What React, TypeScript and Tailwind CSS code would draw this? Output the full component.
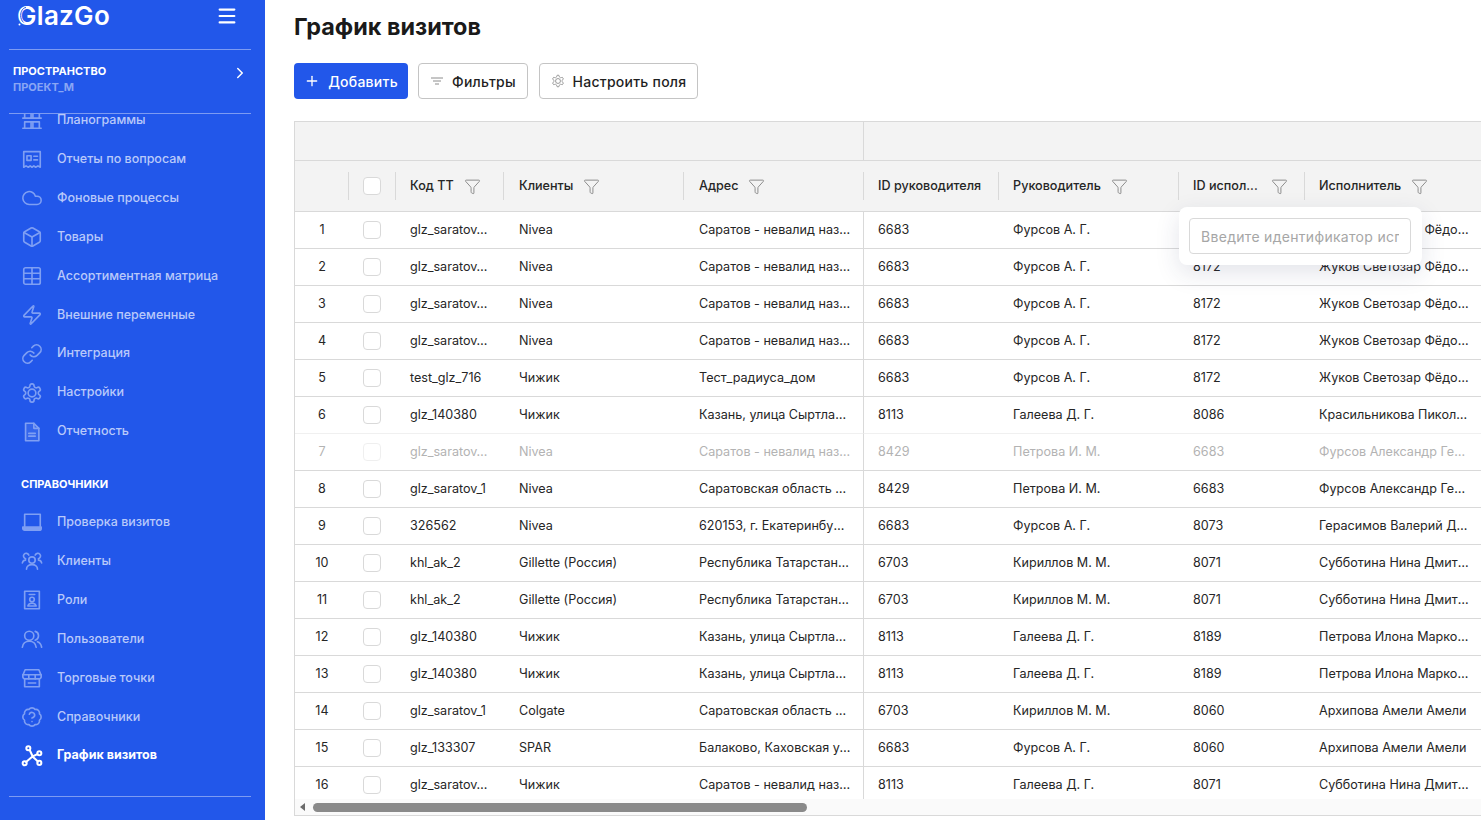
import {
  BadgeHelp,
  Box,
  ChevronRight,
  Cloud,
  Funnel,
  Link,
  Menu,
  Plus,
  Table,
  Zap,
} from "lucide-react";
import type { ReactNode } from "react";

const iconProps = { width: 22, height: 22, viewBox: "0 0 24 24", fill: "none", stroke: "currentColor", strokeWidth: 1.8, strokeLinecap: "round", strokeLinejoin: "round" } as const;

const gearPath =
  "M12.22 2h-.44a2 2 0 0 0-2 2v.18a2 2 0 0 1-1 1.73l-.43.25a2 2 0 0 1-2 0l-.15-.08a2 2 0 0 0-2.73.73l-.22.38a2 2 0 0 0 .73 2.73l.15.1a2 2 0 0 1 1 1.72v.51a2 2 0 0 1-1 1.74l-.15.09a2 2 0 0 0-.73 2.73l.22.38a2 2 0 0 0 2.73.73l.15-.08a2 2 0 0 1 2 0l.43.25a2 2 0 0 1 1 1.73V20a2 2 0 0 0 2 2h.44a2 2 0 0 0 2-2v-.18a2 2 0 0 1 1-1.73l.43-.25a2 2 0 0 1 2 0l.15.08a2 2 0 0 0 2.73-.73l.22-.39a2 2 0 0 0-.73-2.73l-.15-.08a2 2 0 0 1-1-1.74v-.5a2 2 0 0 1 1-1.74l.15-.09a2 2 0 0 0 .73-2.73l-.22-.38a2 2 0 0 0-2.73-.73l-.15.08a2 2 0 0 1-2 0l-.43-.25a2 2 0 0 1-1-1.73V4a2 2 0 0 0-2-2z";

const PlanogramIcon = () => (
  <svg {...iconProps}>
    <path d="M2 21h20M4 21v-7h7v7M13 21v-7h7v7M4 14h16M4 10V3h7v7M13 10V3h7v7M2 10h20" />
  </svg>
);
const ReportIcon = () => (
  <svg {...iconProps}>
    <path d="M3 4h18v17l-2.500-1.500L16 21l-2-1.500L12 21l-2-1.500L8 21l-2.500-1.500L3 21z" />
    <path d="M6.500 8.500h4.500v5H6.500zM14 9h4M14 13h4" />
  </svg>
);
const GearIcon = () => (
  <svg {...iconProps}>
    <path d={gearPath} />
    <circle cx="12" cy="12" r="4.200" />
  </svg>
);
const DocIcon = () => (
  <svg {...iconProps}>
    <path d="M5 2.500h9l5.500 5.500v13.500H5z" fill="currentColor" fillOpacity="0.2" />
    <path d="M14 2.500V8h5.500" />
    <path d="M8.500 13.500h7M8.500 16.500h7" />
  </svg>
);
const LaptopIcon = () => (
  <svg {...iconProps}>
    <path d="M4 17V3.500h17V17" />
    <path d="M2 17.500h20v1.500a2 2 0 0 1-2 2H4a2 2 0 0 1-2-2z" fill="currentColor" />
  </svg>
);
const ClientsIcon = () => (
  <svg {...iconProps}>
    <circle cx="12" cy="11" r="3.500" />
    <path d="M6 21c0-3 2.500-5 6-5s6 2 6 5M8.500 5.500a3 3 0 1 0-3.500 4M15.500 5.500a3 3 0 1 1 3.500 4M1.500 14c.5-2 2-3 3.500-3M22.500 14c-.5-2-2-3-3.500-3" />
  </svg>
);
const RoleIcon = () => (
  <svg {...iconProps}>
    <path d="M4 2.500h16v19H4zM9 6h6" />
    <circle cx="12" cy="11.500" r="2.500" />
    <path d="M7.500 18.500c.5-2 2-3 4.500-3s4 1 4.500 3z" />
  </svg>
);
const PeopleIcon = () => (
  <svg {...iconProps}>
    <circle cx="9" cy="8.500" r="5" />
    <path d="M1.500 21c.5-4 3.500-6.500 7.500-6.500s7 2.500 7.500 6.500M15.500 3.700a5 5 0 0 1 0 9.600M18 15c2.500.8 4 3 4.500 6" />
  </svg>
);
const ShopIcon = () => (
  <svg {...iconProps}>
    <path d="M4.500 3h15l2.500 6v1.500a2.500 2.500 0 0 1-2.500 2.500h-15A2.500 2.500 0 0 1 2 10.500V9z" />
    <path d="M2 8.500h20M8.500 8.500V13M15.500 8.500V13M4 13v8.500h16V13M8 17.500h8" />
  </svg>
);
const GraphIcon = () => (
  <svg {...iconProps} strokeWidth={2.2}>
    <circle cx="8" cy="3.500" r="2.200" />
    <circle cx="20" cy="9" r="2.200" />
    <circle cx="20" cy="19.500" r="2.200" />
    <circle cx="4" cy="20" r="2.200" />
    <path d="M9.500 5.500l3 6.500M18 10l-5.500 2.500M18.500 18l-6-5.500M5.500 18.500l7-6" />
  </svg>
);

type NavEntry = { label: string; icon: ReactNode; active?: boolean };

const topNav: NavEntry[] = [
  { label: "Планограммы", icon: <PlanogramIcon /> },
  { label: "Отчеты по вопросам", icon: <ReportIcon /> },
  { label: "Фоновые процессы", icon: <Cloud size={24} strokeWidth={1.7} /> },
  { label: "Товары", icon: <Box size={22} strokeWidth={1.8} /> },
  { label: "Ассортиментная матрица", icon: <Table size={22} strokeWidth={1.8} /> },
  { label: "Внешние переменные", icon: <Zap size={22} strokeWidth={1.8} /> },
  { label: "Интеграция", icon: <Link size={22} strokeWidth={1.8} /> },
  { label: "Настройки", icon: <GearIcon /> },
  { label: "Отчетность", icon: <DocIcon /> },
];

const refNav: NavEntry[] = [
  { label: "Проверка визитов", icon: <LaptopIcon /> },
  { label: "Клиенты", icon: <ClientsIcon /> },
  { label: "Роли", icon: <RoleIcon /> },
  { label: "Пользователи", icon: <PeopleIcon /> },
  { label: "Торговые точки", icon: <ShopIcon /> },
  { label: "Справочники", icon: <BadgeHelp size={22} strokeWidth={1.8} /> },
  { label: "График визитов", icon: <GraphIcon />, active: true },
];

const saratovAddr = "Саратов - невалид название магазина";
const oblAddr = "Саратовская область Балаково";
const kazan = "Казань, улица Сыртлановой, 12";
const tatar = "Республика Татарстан, Казань";
const zhukov = "Жуков Светозар Фёдорович";
const fursov = "Фурсов Александр Геннадьевич";
const subbotina = "Субботина Нина Дмитриевна";
const petrova = "Петрова Илона Марковна";
const arkhipova = "Архипова Амели Амели";

const rows = [
  ["glz_saratov_10", "Nivea", saratovAddr, "6683", "Фурсов А. Г.", "8172", zhukov],
  ["glz_saratov_10", "Nivea", saratovAddr, "6683", "Фурсов А. Г.", "8172", zhukov],
  ["glz_saratov_10", "Nivea", saratovAddr, "6683", "Фурсов А. Г.", "8172", zhukov],
  ["glz_saratov_10", "Nivea", saratovAddr, "6683", "Фурсов А. Г.", "8172", zhukov],
  ["test_glz_716", "Чижик", "Тест_радиуса_дом", "6683", "Фурсов А. Г.", "8172", zhukov],
  ["glz_140380", "Чижик", kazan, "8113", "Галеева Д. Г.", "8086", "Красильникова Пиколина Ивановна"],
  ["glz_saratov_10", "Nivea", saratovAddr, "8429", "Петрова И. М.", "6683", fursov],
  ["glz_saratov_1", "Nivea", oblAddr, "8429", "Петрова И. М.", "6683", fursov],
  ["326562", "Nivea", "620153, г. Екатеринбург, ул. Ленина", "6683", "Фурсов А. Г.", "8073", "Герасимов Валерий Дмитриевич"],
  ["khl_ak_2", "Gillette (Россия)", tatar, "6703", "Кириллов М. М.", "8071", subbotina],
  ["khl_ak_2", "Gillette (Россия)", tatar, "6703", "Кириллов М. М.", "8071", subbotina],
  ["glz_140380", "Чижик", kazan, "8113", "Галеева Д. Г.", "8189", petrova],
  ["glz_140380", "Чижик", kazan, "8113", "Галеева Д. Г.", "8189", petrova],
  ["glz_saratov_1", "Colgate", oblAddr, "6703", "Кириллов М. М.", "8060", arkhipova],
  ["glz_133307", "SPAR", "Балаково, Каховская улица, 5", "6683", "Фурсов А. Г.", "8060", arkhipova],
  ["glz_saratov_10", "Чижик", saratovAddr, "8113", "Галеева Д. Г.", "8071", subbotina],
];

function NavItem({ label, icon, active }: NavEntry) {
  return (
    <div className={`flex h-[38.9px] shrink-0 items-center pl-[21px] text-[12.5px] ${active ? "font-bold text-white" : "font-medium text-[#b9c9fa]"}`}>
      <span className={`flex w-[22px] justify-center ${active ? "text-white" : "text-[#7f9ff3]"}`}>{icon}</span>
      <span className="ml-[14px]">{label}</span>
    </div>
  );
}

function Logo() {
  return (
    <span className="relative text-[26px] leading-[32px] font-semibold tracking-[0.3px] text-white">
      GlazGo
      {/* the G of the logo has a thin cut on its left side and a dot under it */}
      <svg width="18" height="24" viewBox="0 0 18 24" fill="none" className="absolute top-[4px] left-0">
        <path d="M9 3.500C5.500 4 3.700 7.500 3.700 11.500c0 3 1 5.500 3 7" stroke="#2257ea" strokeWidth="1" />
        <circle cx="2.500" cy="20.500" r="1" fill="#ffffff" />
      </svg>
    </span>
  );
}

function Sidebar() {
  return (
    <aside className="flex h-full w-[265px] shrink-0 flex-col bg-[#2257ea]">
      <div className="mr-[14px] ml-[9px] flex h-[50px] shrink-0 items-start justify-between border-b border-[#7d9bf2] pr-[13px] pl-[8px]">
        <Logo />
        <Menu size={22} strokeWidth={2.4} className="mt-[5px] text-white" />
      </div>
      <div className="mr-[14px] ml-[9px] flex h-[64px] shrink-0 items-start justify-between border-b border-[#7d9bf2] pt-[13px] pr-[2px] pl-[4px]">
        <div className="text-[11px] leading-[16px] font-bold">
          <div className="text-white">ПРОСТРАНСТВО</div>
          <div className="text-[#8aa6f4]">ПРОЕКТ_М</div>
        </div>
        <ChevronRight size={18} strokeWidth={2} className="mt-[1px] text-white" />
      </div>
      <nav className="flex min-h-0 flex-1 flex-col overflow-hidden">
        <div className="-mt-[13px] flex flex-col">
          {topNav.map((item) => (
            <NavItem key={item.label} {...item} />
          ))}
          <div className="flex h-[52px] items-end pb-[11px] pl-[21px] text-[11px] leading-[16px] font-bold text-white">СПРАВОЧНИКИ</div>
          {refNav.map((item) => (
            <NavItem key={item.label} {...item} />
          ))}
        </div>
      </nav>
      <div className="mr-[14px] mb-[23px] ml-[9px] shrink-0 border-b border-[#7d9bf2]" />
    </aside>
  );
}

function HeadCell({ label, filter, last, labelClass, pad }: { label?: string; filter?: boolean; last?: boolean; labelClass?: string; pad?: string }) {
  return (
    <th className="border-b border-[#d9d9d9] p-0 text-left font-medium">
      <div className={`flex h-[28px] items-center ${pad ?? "pl-[14px]"} ${last ? "" : "border-r border-[#d9d9d9]"}`}>
        {label && <span className={`whitespace-nowrap ${labelClass ?? ""}`}>{label}</span>}
        {filter && <Funnel size={17} strokeWidth={1.4} className={`shrink-0 text-[#8c8c8c] ${labelClass ? "ml-[13px]" : "ml-[10px]"}`} />}
      </div>
    </th>
  );
}

function Check({ className }: { className?: string }) {
  return <div className={`mx-auto h-[18px] w-[18px] rounded-[4px] border border-[#d9d9d9] bg-white ${className ?? ""}`} />;
}

function VisitsTable() {
  return (
    <div className="relative flex min-h-0 flex-1 flex-col overflow-hidden border-t border-b border-l border-[#d9d9d9]">
      <div className="min-h-0 flex-1 overflow-hidden">
        <table className="w-[1190px] table-fixed border-separate border-spacing-0 text-[12.6px] text-[#262626]">
          <colgroup>
            <col className="w-[54px]" />
            <col className="w-[47px]" />
            <col className="w-[108px]" />
            <col className="w-[180px]" />
            <col className="w-[180px]" />
            <col className="w-[135px]" />
            <col className="w-[180px]" />
            <col className="w-[126px]" />
            <col className="w-[180px]" />
          </colgroup>
          <thead className="bg-[#f3f3f3]">
            <tr className="h-[39px]">
              <th colSpan={5} className="border-r border-b border-[#d9d9d9]" />
              <th colSpan={4} className="border-b border-[#d9d9d9]" />
            </tr>
            <tr className="h-[51px]">
              <HeadCell />
              <th className="border-b border-[#d9d9d9] p-0">
                <div className="flex h-[28px] items-center border-r border-[#d9d9d9]">
                  <Check />
                </div>
              </th>
              <HeadCell label="Код ТТ" filter />
              <HeadCell label="Клиенты" filter pad="pl-[15px]" />
              <HeadCell label="Адрес" filter pad="pl-[15px]" />
              <HeadCell label="ID руководителя" />
              <HeadCell label="Руководитель" filter />
              <HeadCell label="ID испол..." filter labelClass="w-[65px]" />
              <HeadCell label="Исполнитель" filter last />
            </tr>
          </thead>
          <tbody>
            {rows.map((row, i) => {
              const faded = i === 6;
              const line = i === 5 ? "border-[#f0f0f0]" : "border-[#d9d9d9]";
              return (
                <tr key={i} className="h-[37px]">
                  <td className={`border-b p-0 text-center ${line} ${faded ? "text-[#b3b3b3]" : ""}`}>{i + 1}</td>
                  <td className={`border-b p-0 pr-px ${line}`}>
                    <Check className={faded ? "opacity-40" : ""} />
                  </td>
                  {row.map((value, c) => (
                    <td
                      key={c}
                      className={`truncate border-b ${c === 2 ? "pr-[12px]" : "pr-[14px]"} ${c === 1 || c === 2 ? "pl-[15px]" : "pl-[14px]"} ${line} ${c === 2 ? "border-r border-r-[#d9d9d9]" : ""} ${faded ? "text-[#b3b3b3]" : ""}`}
                    >
                      {value}
                    </td>
                  ))}
                </tr>
              );
            })}
          </tbody>
        </table>
      </div>
      <div className="flex h-[16px] shrink-0 items-center bg-[#fafafa]">
        <span className="ml-[5px] h-0 w-0 border-y-[4px] border-r-[5px] border-y-transparent border-r-[#6b6b6b]" />
        <div className="ml-[8px] h-[9px] w-[494px] rounded-full bg-[#8a8a8a]" />
      </div>
      <div className="absolute top-[85px] left-[884px] w-[243px] rounded-lg bg-white py-[11px] pr-[11px] pl-[10px] shadow-[0_8px_24px_rgba(40,50,90,0.13)]">
        <input
          readOnly
          placeholder="Введите идентификатор исполнителя"
          className="h-[36px] w-full rounded-[4px] border border-[#d9d9d9] px-[11px] text-[14px] tracking-[0.3px] outline-none placeholder:text-[#a6a6a6]"
        />
      </div>
    </div>
  );
}

export default function App() {
  return (
    <div className="flex h-screen w-full overflow-hidden bg-white font-[Inter] text-[#1f1f1f]">
      <Sidebar />
      <main className="flex min-w-0 flex-1 flex-col pb-[4px] pl-[29px]">
        <h1 className="mt-[12px] text-[23.4px] leading-[30px] font-bold text-[#1a1a1a]">График визитов</h1>
        <div className="mt-[21px] flex h-[36px] gap-[10px] text-[14px] font-medium tracking-[0.25px]">
          <button className="flex w-[114px] items-center justify-center gap-[8px] rounded-[4px] bg-[#2257ea] text-white">
            <Plus size={16} strokeWidth={2} />
            Добавить
          </button>
          <button className="flex w-[110px] items-center justify-center gap-[8px] rounded-[4px] border border-[#c4c4c4] bg-white">
            <svg width="14" height="14" viewBox="0 0 14 14" fill="none" stroke="#8c8c8c" strokeWidth="1">
              <path d="M1 4h12M3 7h8M5 10h4" />
            </svg>
            Фильтры
          </button>
          <button className="ml-px flex w-[159px] items-center justify-center gap-[8px] rounded-[4px] border border-[#c4c4c4] bg-white">
            <svg width="14" height="14" viewBox="0 0 24 24" fill="none" stroke="#8c8c8c" strokeWidth="1.500">
              <path d={gearPath} />
              <circle cx="12" cy="12" r="4.200" />
            </svg>
            Настроить поля
          </button>
        </div>
        <div className="mt-[22px] flex min-h-0 flex-1 flex-col">
          <VisitsTable />
        </div>
      </main>
    </div>
  );
}
